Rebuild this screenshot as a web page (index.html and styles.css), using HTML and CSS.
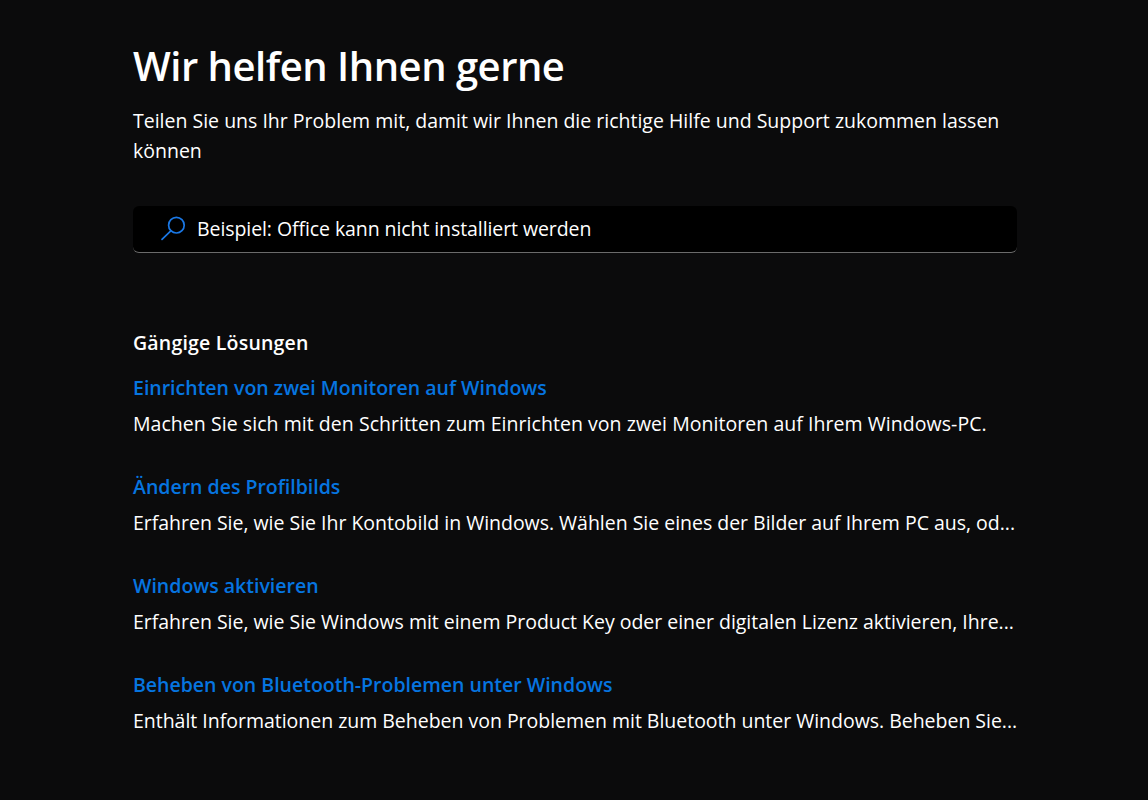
FILE: index.html
```html
<!DOCTYPE html>
<html lang="de">
<head>
<meta charset="utf-8">
<title>Hilfe</title>
<link rel="stylesheet" href="styles.css">
</head>
<body>
<main class="page">
  <h1 class="title">Wir helfen Ihnen gerne</h1>
  <p class="intro">Teilen Sie uns Ihr Problem mit, damit wir Ihnen die richtige Hilfe und Support zukommen lassen können</p>
  <div class="search">
    <svg class="search-icon" width="26" height="26" viewBox="0 0 26 26" fill="none" stroke="#1a78e6" stroke-width="1.7"><circle cx="16.4" cy="9.2" r="7.8"/><path d="M10.8 14.8 2 23.4" stroke-linecap="round"/></svg>
    <span class="search-text">Beispiel: Office kann nicht installiert werden</span>
  </div>
  <h2 class="section">Gängige Lösungen</h2>
  <ul class="results">
    <li class="result"><a class="result-link">Einrichten von zwei Monitoren auf Windows</a><p class="result-text">Machen Sie sich mit den Schritten zum Einrichten von zwei Monitoren auf Ihrem Windows-PC.</p></li>
    <li class="result"><a class="result-link">Ändern des Profilbilds</a><p class="result-text result-text-cut">Erfahren Sie, wie Sie Ihr Kontobild in Windows. Wählen Sie eines der Bilder auf Ihrem PC aus, od...</p></li>
    <li class="result"><a class="result-link">Windows aktivieren</a><p class="result-text result-text-cut">Erfahren Sie, wie Sie Windows mit einem Product Key oder einer digitalen Lizenz aktivieren, Ihre...</p></li>
    <li class="result"><a class="result-link">Beheben von Bluetooth-Problemen unter Windows</a><p class="result-text result-text-cut">Enthält Informationen zum Beheben von Problemen mit Bluetooth unter Windows. Beheben Sie...</p></li>
  </ul>
</main>
</body>
</html>
```
FILE: styles.css
```css
* { box-sizing: border-box; }
html, body { margin: 0; height: 100%; }
body {
  background: #0b0b0c;
  color: #fff;
  font-family: "Open Sans", "Noto Sans", sans-serif;
  overflow: hidden;
}
.page { width: 884px; margin-left: 133px; padding-top: 37px; }
.title { margin: 0; font-size: 40px; line-height: 58px; font-weight: 600; letter-spacing: -0.5px; }
.intro { margin: 11px 0 0; font-size: 19.5px; line-height: 30px; letter-spacing: 0; }
.search {
  margin-top: 40px; height: 47px; background: #000;
  border-radius: 6px; border-bottom: 1px solid #6b6b6b;
  display: flex; align-items: center; padding: 0 0 1px 27px; gap: 11px;
}
.search-icon { flex: none; }
.search-text { font-size: 19.5px; letter-spacing: -0.08px; }
.section { margin: 76px 0 0; font-size: 19.5px; line-height: 28px; font-weight: 600; letter-spacing: 0.2px; }
.results { list-style: none; margin: 13px 0 0; padding: 0; display: flex; flex-direction: column; gap: 27px; }
.result-link { display: block; color: #0675e0; font-size: 19.5px; line-height: 36px; letter-spacing: 0; font-weight: 600; }
.result-text { margin: 0; font-size: 19.5px; line-height: 36px; letter-spacing: 0.05px; white-space: nowrap; }
.result-text-cut { letter-spacing: -0.02px; }
```
